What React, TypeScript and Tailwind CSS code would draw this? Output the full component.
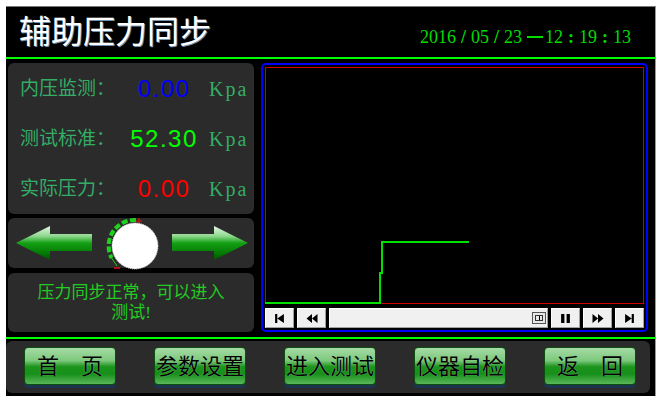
import React from "react";

const serif = "font-['Liberation_Serif','Noto_Sans_CJK_SC',serif]";
const sans = "font-['Liberation_Sans','Noto_Sans_CJK_SC',sans-serif]";

function Arrow({ dir }: { dir: "left" | "right" }) {
    const id = `arrow-${dir}`;
    return (
        <svg width="76" height="34" viewBox="0 0 76 34" className={dir === "right" ? "-scale-x-100" : ""}>
            <defs>
                <linearGradient id={id} x1="0" y1="0" x2="0" y2="1">
                    <stop offset="0" stopColor="#e2f6e2" />
                    <stop offset="0.3" stopColor="#8ed88e" />
                    <stop offset="0.5" stopColor="#14a014" />
                    <stop offset="0.8" stopColor="#037a03" />
                    <stop offset="1" stopColor="#005200" />
                </linearGradient>
            </defs>
            <path d="M0 17 L34 0 L34 8 L76 8 L76 25 L34 25 L34 34 Z" fill={`url(#${id})`} />
        </svg>
    );
}

function Knob() {
    return (
        <svg width="80" height="50" viewBox="0 0 80 50" overflow="visible">
            <path d="M44 2 A26 26 0 0 0 19.6 40" fill="none" stroke="#1ed31e" strokeWidth="4" strokeDasharray="6 2.5" />
            <path d="M19.6 40 L25 48" stroke="#1ed31e" strokeWidth="1" />
            <path d="M47 0 v6 M44 3 h6" stroke="#e01010" strokeWidth="1.2" />
            <path d="M22 50 h6" stroke="#e01010" strokeWidth="1.5" />
            <circle cx="43" cy="28" r="23" fill="#ffffff" stroke="#e0e0e0" strokeWidth="1" strokeDasharray="1 1" />
        </svg>
    );
}

function CtrlButton({ children }: { children: React.ReactNode }) {
    return (
        <div className="w-[29px] h-[20px] bg-[#f0f0f0] border border-t-white border-l-white border-r-[#a0a0a0] border-b-[#a0a0a0] flex items-center justify-center">
            {children}
        </div>
    );
}

const rows = [
    { label: "内压监测：", value: "0.00", color: "text-[#0000ff]" },
    { label: "测试标准：", value: "52.30", color: "text-[#00ff00]" },
    { label: "实际压力：", value: "0.00", color: "text-[#ff0000]" },
];

const navButtons = ["首　页", "参数设置", "进入测试", "仪器自检", "返　回"];

export default function App() {
    return (
        <div className="w-[657px] h-[396px] bg-white pt-[6px] pl-[6px] overflow-hidden">
            <div className="w-[650px] h-[390px] bg-black border-t border-t-[#777] border-r border-r-[#999] flex flex-col">
                {/* header */}
                <div className="h-[50px] flex items-center justify-between pl-[13px] pr-[24px]">
                    <h1 className={`${sans} text-[32px] text-white leading-none [text-shadow:1px_1px_0_#7090b0]`}>辅助压力同步</h1>
                    <div className={`${serif} text-[18px] text-[#00dd00] mt-[10px] flex items-center gap-[5px]`}>
                        <span>2016</span><b>/</b><span>05</span><b>/</b><span>23</span>
                        <span className="flex items-center"><span className="w-[16px] h-[2px] bg-[#00dd00] mr-[2px]" />12</span>
                        <b>:</b><span>19</span><b>:</b><span>13</span>
                    </div>
                </div>
                <div className="h-[2px] bg-[#00ff00]" />

                {/* main */}
                <div className="h-[278px] flex pl-[2px] pt-[4px] pb-[5px] gap-[7px]">
                    <div className="w-[246px] flex flex-col">
                        <div className="h-[151px] bg-[#2b2b2b] rounded-[6px] flex flex-col justify-center gap-[26px] pl-[12px] pt-[1px]">
                            {rows.map((r) => (
                                <div key={r.label} className="flex items-center h-[24px]">
                                    <span className={`${serif} w-[104px] text-[19px] text-[#34ad66]`}>{r.label}</span>
                                    <span className={`${sans} w-[80px] text-center text-[24px] tracking-[1.5px] ${r.color}`}>{r.value}</span>
                                    <span className={`${serif} ml-[5px] text-[20px] tracking-[2px] text-[#34ad66]`}>Kpa</span>
                                </div>
                            ))}
                        </div>
                        <div className="h-[50px] mt-[4px] bg-[#2b2b2b] rounded-[6px] flex items-center pl-[8px]">
                            <Arrow dir="left" />
                            <Knob />
                            <Arrow dir="right" />
                        </div>
                        <div className={`${serif} h-[59px] mt-[5px] bg-[#2b2b2b] rounded-[6px] flex flex-col items-center justify-center text-[17px] leading-[20px] text-[#22cc22]`}>
                            <span>压力同步正常，可以进入</span>
                            <span>测试!</span>
                        </div>
                    </div>

                    {/* chart */}
                    <div className="w-[387px] h-[269px] border-2 border-[#0000ff] rounded-[5px] p-[2px] flex flex-col">
                        <div className="relative h-[237px] border border-[#d00000]">
                            <svg className="absolute left-[-1px] top-[-1px]" width="380" height="237" viewBox="0 0 380 237">
                                <path d="M0 236 H115 V206 H117 V175 H204" fill="none" stroke="#00e000" strokeWidth="2" />
                            </svg>
                        </div>
                        <div className="h-[20px] mt-[4px] flex gap-[3px]">
                            <CtrlButton>
                                <svg width="11" height="11" viewBox="0 0 10 10"><path d="M1 1h2v8H1z M9 1v8L3 5z" fill="#000" /></svg>
                            </CtrlButton>
                            <CtrlButton>
                                <svg width="14" height="11" viewBox="0 0 12 10"><path d="M6 1v8L1 5z M11 1v8L6 5z" fill="#000" /></svg>
                            </CtrlButton>
                            <div className="flex-1 bg-[#f0f0f0] border border-t-white border-l-white border-r-[#a0a0a0] border-b-[#a0a0a0] flex items-center justify-end pr-[1px]">
                                <div className="w-[14px] h-[12px] border border-[#555] bg-[#e8e8e8] flex items-center justify-center">
                                    <div className="w-[8px] h-[6px] border border-[#333] flex items-center justify-center">
                                        <div className="w-[1px] h-[4px] bg-black" />
                                    </div>
                                </div>
                            </div>
                            <CtrlButton>
                                <svg width="11" height="11" viewBox="0 0 10 10"><path d="M1 1h3v8H1z M6 1h3v8H6z" fill="#000" /></svg>
                            </CtrlButton>
                            <CtrlButton>
                                <svg width="14" height="11" viewBox="0 0 12 10"><path d="M1 1v8l5-4z M6 1v8l5-4z" fill="#000" /></svg>
                            </CtrlButton>
                            <CtrlButton>
                                <svg width="11" height="11" viewBox="0 0 10 10"><path d="M1 1v8l6-4z M7 1h2v8H7z" fill="#000" /></svg>
                            </CtrlButton>
                        </div>
                    </div>
                </div>
                <div className="h-[2px] bg-[#00ff00]" />

                {/* footer */}
                <div className="mt-[2px] h-[52px] w-[644px] bg-[#2b2b2b] rounded-[6px] flex items-center gap-[38px] pl-[18px] pb-[2px]">
                    {navButtons.map((b) => (
                        <div
                            key={b}
                            className={`${serif} w-[92px] h-[38px] rounded-[4px] border border-[#0d4d0d] bg-[linear-gradient(180deg,#a6dca6_0%,#7cc87c_35%,#1c941c_52%,#16901a_72%,#5ab65a_100%)] shadow-[0_3px_0_#1b3550] flex items-center justify-center text-[22px] text-black [text-shadow:0_0_1px_#9fd69f]`}
                        >
                            {b}
                        </div>
                    ))}
                </div>
            </div>
        </div>
    );
}
